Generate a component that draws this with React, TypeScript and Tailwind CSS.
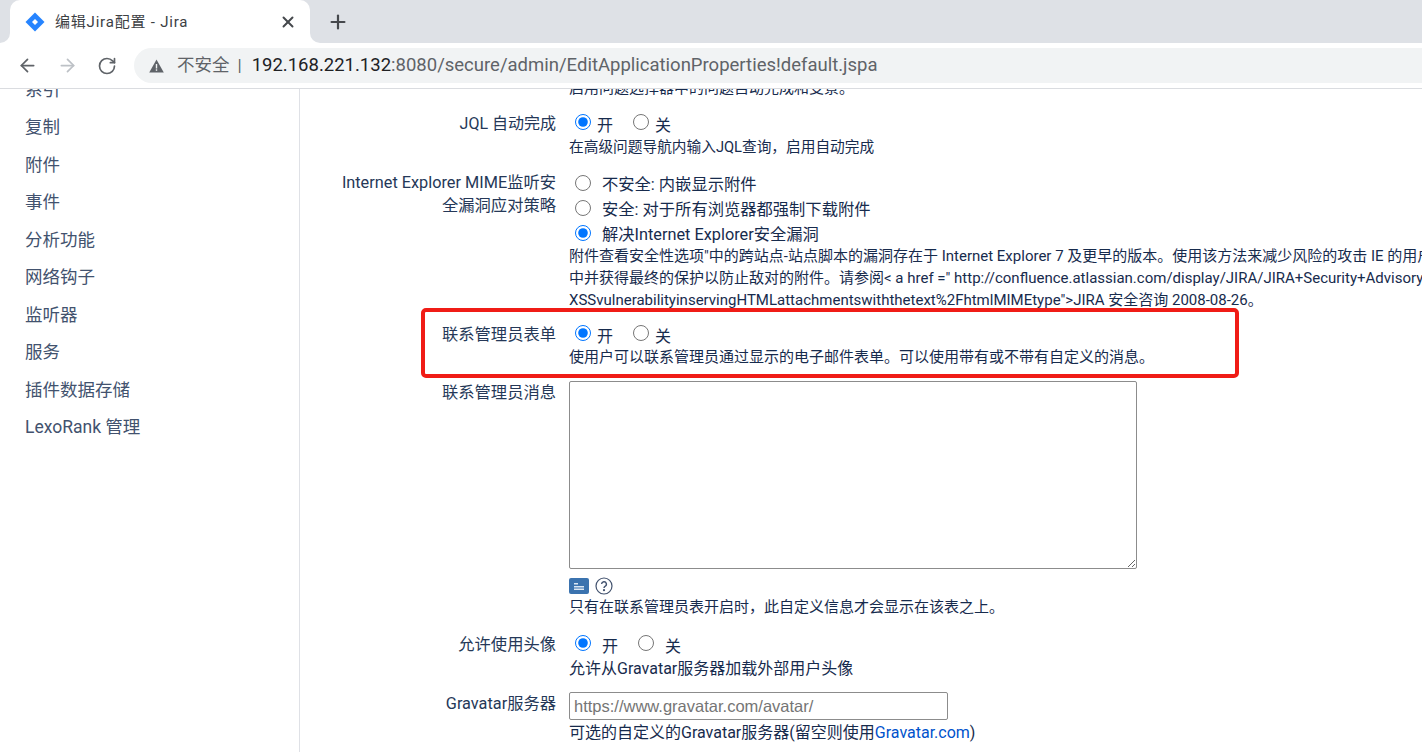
import type { ReactNode } from "react"
import { ArrowLeft, ArrowRight, Plus, RotateCw, X } from "lucide-react"

const sideItems = ["复制", "附件", "事件", "分析功能", "网络钩子", "监听器", "服务", "插件数据存储", "LexoRank 管理"]

const FormRow = ({ label, top, labelTop, children }: { label: ReactNode; top: string; labelTop?: string; children: ReactNode }) => (
  <div className={`flex gap-[13px] ${top}`}>
    <div className={`w-[216px] shrink-0 text-right text-[16.3px] leading-[22.5px] text-[#253858] ${labelTop ?? ""}`}>{label}</div>
    <div className="min-w-0 flex-1">{children}</div>
  </div>
)

const Desc = ({ size, children }: { size?: string; children: ReactNode }) => (
  <div className={`whitespace-nowrap leading-[22px] text-[#172b4d] ${size ?? "text-[15px]"}`}>{children}</div>
)

const OnOff = ({ name, wide }: { name: string; wide?: boolean }) => (
  <div className="flex h-[22px] items-center gap-[20px] text-[16px] text-[#172b4d]">
    <label className="flex items-center">
      <input type="radio" name={name} defaultChecked className="mb-[4px] ml-[6px] h-[16px] w-[16px]" />
      <span className={`mt-[4px] ${wide ? "ml-[11px]" : "ml-[6px]"}`}>开</span>
    </label>
    <label className="flex items-center">
      <input type="radio" name={name} className="mb-[4px] h-[16px] w-[16px]" />
      <span className={`mt-[4px] ${wide ? "ml-[11px]" : "ml-[6px]"}`}>关</span>
    </label>
  </div>
)

const Option = ({ checked, children }: { checked?: boolean; children: ReactNode }) => (
  <label className="flex h-[25px] items-center text-[16.3px] text-[#172b4d]">
    <input type="radio" name="mime" defaultChecked={checked} className="mb-[4px] ml-[6px] h-[16px] w-[16px]" />
    <span className="ml-[11px] mt-[2px]">{children}</span>
  </label>
)

const TabCorner = ({ side }: { side: "left" | "right" }) => (
  <div className={`absolute bottom-0 h-[10px] w-[10px] bg-white ${side === "left" ? "left-[-10px]" : "right-[-10px]"}`}>
    <div className={`h-full w-full bg-[#dee1e6] ${side === "left" ? "rounded-br-[10px]" : "rounded-bl-[10px]"}`} />
  </div>
)

export default function App() {
  return (
    <div className="flex h-[752px] w-[1422px] flex-col overflow-hidden bg-white font-['Roboto','Noto_Sans_CJK_SC',sans-serif]">
      {/* tab strip */}
      <div className="flex h-[43px] shrink-0 bg-[#dee1e6] pl-[10px]">
        <div className="relative flex w-[300px] items-center rounded-t-[10px] bg-white pl-[15px] pr-[13px]">
          <TabCorner side="left" />
          <TabCorner side="right" />
          <svg width="20" height="20" viewBox="0 0 20 20" className="shrink-0">
            <path d="M10 0.5 19.5 10 10 19.5 0.5 10Z" fill="#2684ff" />
            <path d="M10 7 13 10 10 13 7 10Z" fill="#fff" />
          </svg>
          <span className="ml-[10px] mt-[2px] flex-1 text-[15px] tracking-[0.8px] text-[#3c4043]">编辑Jira配置 - Jira</span>
          <X size={18} strokeWidth={2.6} className="text-[#45484c]" />
        </div>
        <div className="ml-[17px] flex items-center">
          <Plus size={22} strokeWidth={2.4} className="text-[#45484c]" />
        </div>
      </div>

      {/* toolbar */}
      <div className="flex h-[46px] shrink-0 items-center border-b border-[#dadce0] bg-white pl-[17px]">
        <ArrowLeft size={21} strokeWidth={2} className="text-[#5f6368]" />
        <ArrowRight size={21} strokeWidth={2} className="ml-[19px] text-[#bdc1c6]" />
        <RotateCw size={20} strokeWidth={2} className="ml-[19px] mt-[1px] text-[#5f6368]" />
        <div className="ml-[17px] flex h-[35px] flex-1 items-center rounded-l-full bg-[#f1f3f4] pl-[15px]">
          <svg width="15" height="14" viewBox="0 0 15 14" className="shrink-0">
            <path d="M7.5 0.5 14.8 13.5H0.2Z" fill="#5f6368" />
            <rect x="6.8" y="5" width="1.4" height="4.5" fill="#f1f3f4" />
            <rect x="6.8" y="10.3" width="1.4" height="1.5" fill="#f1f3f4" />
          </svg>
          <span className="ml-[13px] text-[17.5px] text-[#5f6368]">不安全</span>
          <span className="ml-[8px] text-[17px] text-[#5f6368]">|</span>
          <span className="ml-[10px] whitespace-nowrap text-[18.5px] text-[#5f6368]">
            <span className="text-[#202124]">192.168.221.132</span>:8080/secure/admin/EditApplicationProperties!default.jspa
          </span>
        </div>
      </div>

      {/* page */}
      <div className="relative flex min-h-0 flex-1 overflow-hidden">
        <aside className="w-[300px] shrink-0 overflow-hidden border-r border-[#dfe1e6] pl-[25px] text-[17.5px] text-[#42526e]">
          <div className="mt-[-18px] flex h-[37.5px] items-center">系引</div>
          {sideItems.map((item) => (
            <div key={item} className="flex h-[37.5px] items-center">
              {item}
            </div>
          ))}
        </aside>

        <main className="min-w-0 flex-1 overflow-hidden pl-[40px]">
          <div className="mt-[-12px] pl-[229px]">
            <Desc>启用问题选择器中的问题自动完成和变景。</Desc>
          </div>

          <FormRow label={<span className="text-[16px]">JQL 自动完成</span>} top="mt-[14px]">
            <OnOff name="jql" />
            <div className="mt-[1px]">
              <Desc size="text-[14.7px]">在高级问题导航内输入JQL查询，启用自动完成</Desc>
            </div>
          </FormRow>

          <FormRow label="Internet Explorer MIME监听安全漏洞应对策略" top="mt-[14px]">
            <Option>不安全: 内嵌显示附件</Option>
            <Option>安全: 对于所有浏览器都强制下载附件</Option>
            <Option checked>解决Internet Explorer安全漏洞</Option>
            <div className="mt-[-2px]">
              <Desc>附件查看安全性选项"中的跨站点-站点脚本的漏洞存在于 Internet Explorer 7 及更早的版本。使用该方法来减少风险的攻击 IE 的用户。您应该将附件下载到本地</Desc>
              <Desc>中并获得最终的保护以防止敌对的附件。请参阅&lt; a href =" http://confluence.atlassian.com/display/JIRA/JIRA+Security+Advisory+2008-08-26#JIRASecurityAdvisory</Desc>
              <Desc>XSSvulnerabilityinservingHTMLattachmentswiththetext%2FhtmlMIMEtype"&gt;JIRA 安全咨询 2008-08-26。</Desc>
            </div>
          </FormRow>

          <FormRow label="联系管理员表单" top="mt-[13px]">
            <OnOff name="contact" />
            <Desc>使用户可以联系管理员通过显示的电子邮件表单。可以使用带有或不带有自定义的消息。</Desc>
          </FormRow>

          <FormRow label="联系管理员消息" top="mt-[13px]" labelTop="pt-[1px]">
            <textarea className="block h-[188px] w-[568px] rounded-[2px] border border-[#8c8c8c] bg-white" />
            <div className="mt-[8px] flex h-[18px] items-center gap-[6px]">
              <svg width="20" height="16" viewBox="0 0 20 16">
                <rect width="20" height="16" rx="2" fill="#3b73af" />
                <rect x="5" y="5" width="4" height="1.5" fill="#dbe7f3" />
                <rect x="5" y="8" width="10" height="1.5" fill="#dbe7f3" />
                <rect x="5" y="10.5" width="10" height="1.5" fill="#dbe7f3" />
              </svg>
              <svg width="18" height="18" viewBox="0 0 18 18" fill="none" stroke="#42526e" strokeWidth="1.2">
                <circle cx="9" cy="9" r="8" />
                <path d="M6.6 7a2.4 2.4 0 1 1 3.4 2.3c-.7.4-1 .8-1 1.7" strokeWidth="1.4" />
                <circle cx="9" cy="13.2" r=".5" fill="#42526e" />
              </svg>
            </div>
            <div className="mt-[1px]">
              <Desc>只有在联系管理员表开启时，此自定义信息才会显示在该表之上。</Desc>
            </div>
          </FormRow>

          <FormRow label="允许使用头像" top="mt-[16px]">
            <OnOff name="avatar" wide />
            <div className="mt-[2px]">
              <Desc size="text-[16px]">允许从Gravatar服务器加载外部用户头像</Desc>
            </div>
          </FormRow>

          <FormRow label="Gravatar服务器" top="mt-[12px]" labelTop="pt-[1px]">
            <input
              placeholder="https://www.gravatar.com/avatar/"
              className="block h-[28px] w-[379px] rounded-[2px] border border-[#8c8c8c] px-[4px] font-['Liberation_Sans',sans-serif] text-[16.5px] placeholder:text-[#757575]"
            />
            <div className="mt-[2px]">
              <Desc size="text-[16px]">
                可选的自定义的Gravatar服务器(留空则使用<span className="text-[#0052cc]">Gravatar.com</span>)
              </Desc>
            </div>
          </FormRow>
        </main>

        {/* hand-drawn annotation over the screenshot */}
        <div className="pointer-events-none absolute left-[421px] top-[219px] h-[70px] w-[818px] rounded-[5px] border-[4px] border-[#f01c16]" />
      </div>
    </div>
  )
}
